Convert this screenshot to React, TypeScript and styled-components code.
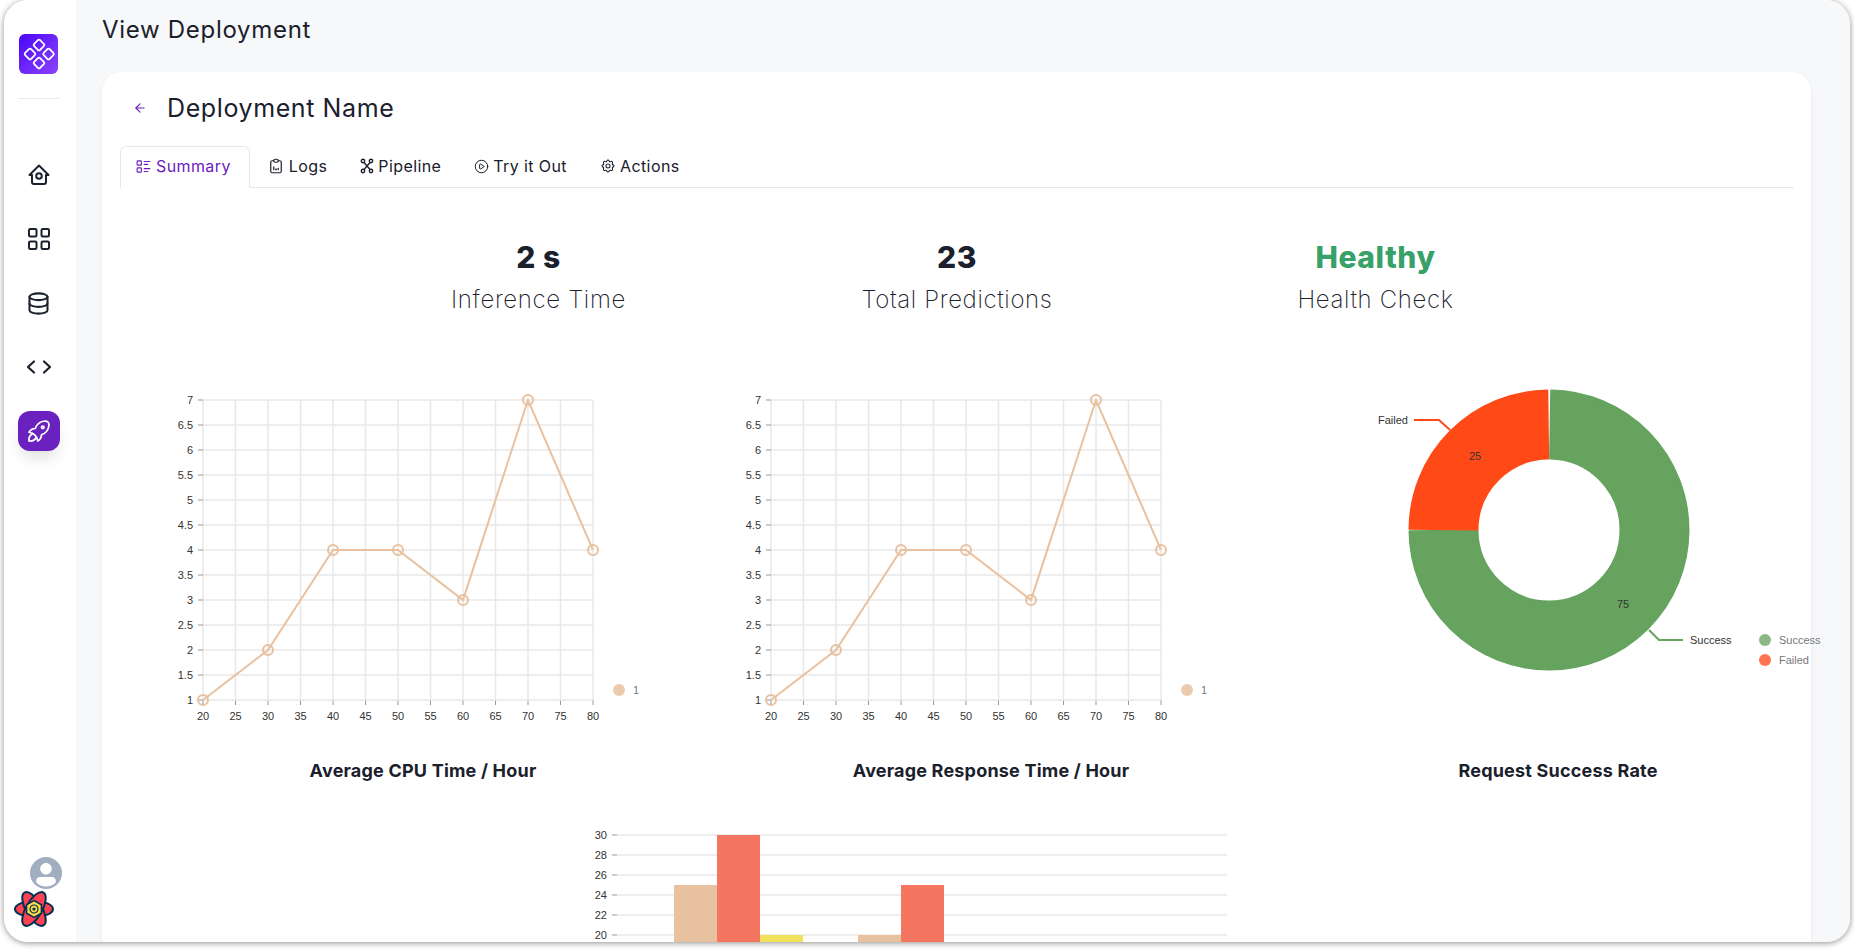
import React from 'react';
import styled, { createGlobalStyle } from 'styled-components';
import { ArrowLeft, CirclePlay } from 'lucide-react';
import { TbClipboardData, TbDatabase, TbLayoutGrid, TbListDetails, TbSettings } from 'react-icons/tb';

const INK = '#1a202c';
const PURPLE = '#6b21c0';
const TAN = '#e8c1a0';
const CORAL = '#f47560';
const YELLOW = '#f1e15b';
const AXIS_FONT = '"Liberation Sans", Arial, sans-serif';

const GlobalStyle = createGlobalStyle`
  html, body {
    margin: 0;
    height: 950px;
    overflow: hidden;
    background: #fff;
    font-family: Inter, "Open Sans", sans-serif;
    color: ${INK};
  }
  * { box-sizing: border-box; }
`;

const Frame = styled.div`
  position: relative;
  display: flex;
  height: 942px;
  margin: 0 4px;
  border-radius: 24px;
  overflow: hidden;
  box-shadow: 0 1px 6px rgba(0, 0, 0, 0.45);
`;

const Sidebar = styled.nav`
  flex: 0 0 72px;
  display: flex;
  flex-direction: column;
  align-items: center;
  padding: 34px 3px 0 0;
  background: #fff;
`;

const Logo = styled.svg`
  display: block;
`;

const SideDivider = styled.div`
  width: 42px;
  height: 1px;
  margin: 24px 0 56px;
  background: #e8ecf2;
`;

const SideButton = styled.div<{ $active?: boolean }>`
  display: flex;
  align-items: center;
  justify-content: center;
  width: 42px;
  height: 40px;
  margin-bottom: 24px;
  border-radius: 12px;
  color: ${p => (p.$active ? '#fff' : INK)};
  background: ${p => (p.$active ? PURPLE : 'transparent')};
  box-shadow: ${p => (p.$active ? '0 10px 15px -3px rgba(0,0,0,0.12)' : 'none')};
`;

const AvatarWrap = styled.div`
  margin-top: auto;
  margin-bottom: 53px;
  margin-left: 15px;
  height: 32px;
`;

const QueryBadge = styled.svg`
  position: absolute;
  left: 9px;
  bottom: 13px;
`;

const Main = styled.main`
  flex: 1;
  min-width: 0;
  padding: 0 39px 0 26px;
  background: #f7f8fa;
`;

const PageTitle = styled.h1`
  margin: 0;
  height: 72px;
  padding-top: 13px;
  font-size: 24px;
  line-height: 34px;
  font-weight: 400;
  letter-spacing: 0.7px;
`;

const Card = styled.section`
  padding: 18px 17px 0 18px;
  border-radius: 20px;
  background: #fff;
  box-shadow: 0 2px 6px rgba(0, 0, 0, 0.05);
`;

const CardHeader = styled.div`
  display: flex;
  align-items: center;
  height: 36px;
  padding-left: 13px;
  color: ${PURPLE};
`;

const CardTitle = styled.h2`
  margin: 0 0 0 20px;
  font-size: 25px;
  font-weight: 400;
  letter-spacing: 0.6px;
  color: ${INK};
`;

const TabBar = styled.div`
  display: flex;
  height: 42px;
  margin-top: 20px;
  border-bottom: 1px solid #e2e8f0;
`;

const Tab = styled.div<{ $active?: boolean }>`
  display: flex;
  align-items: center;
  gap: 4px;
  height: 42px;
  padding: ${p => (p.$active ? '0 18px 2px 14px' : '0 15px 2px 16px')};
  font-size: 16px;
  letter-spacing: 0.4px;
  border: 1px solid ${p => (p.$active ? '#e2e8f0' : 'transparent')};
  border-bottom-color: ${p => (p.$active ? '#fff' : 'transparent')};
  border-radius: 6px 6px 0 0;
  color: ${p => (p.$active ? PURPLE : INK)};
`;

const StatRow = styled.div`
  display: flex;
  justify-content: center;
  padding-top: 49px;
`;

const Stat = styled.div`
  width: 25%;
  text-align: center;
`;

const StatValue = styled.div<{ $green?: boolean }>`
  height: 40px;
  font-size: 30px;
  line-height: 40px;
  font-weight: 800;
  letter-spacing: 0.6px;
  color: ${p => (p.$green ? '#38a169' : INK)};
`;

const StatLabel = styled.div`
  margin-top: 5px;
  font-size: 24px;
  line-height: 36px;
  font-weight: 200;
  letter-spacing: 0.65px;
`;

const ChartGrid = styled.div`
  display: grid;
  grid-template-columns: 568px 568px 566px;
  margin: 42px 0 0 19px;
`;

const ChartBlock = styled.figure`
  margin: 0;
`;

const ChartSvg = styled.svg`
  display: block;
  overflow: visible;
`;

const ChartTitle = styled.figcaption`
  height: 30px;
  margin-top: 6px;
  font-size: 18px;
  line-height: 30px;
  font-weight: 700;
  letter-spacing: 0.2px;
  text-align: center;
`;

const BarRow = styled.div`
  margin: 24px 0 0 437px;
`;

const AxisLabel = styled.text`
  font-family: ${AXIS_FONT};
  font-size: 11px;
  fill: #333;
`;

const LegendLabel = styled(AxisLabel)`
  fill: #777;
`;

const GridLine = styled.line`
  stroke: #e8e8e8;
  stroke-width: 1.5;
`;

const Tick = styled.line`
  stroke: #999;
  stroke-width: 1;
`;

const range = (from: number, to: number, step: number): number[] => {
  const out: number[] = [];
  for (let v = from; v <= to + 1e-6; v += step) out.push(v);
  return out;
};

const linePoints: [number, number][] = [
  [20, 1], [30, 2], [40, 4], [50, 4], [60, 3], [70, 7], [80, 4],
];

function LineChart() {
  const sx = (v: number) => ((v - 20) / 60) * 390;
  const sy = (v: number) => 300 - ((v - 1) / 6) * 300;
  const path = linePoints.map(([x, y]) => `${sx(x)},${sy(y)}`).join(' ');
  return (
    <ChartSvg width={567} height={390}>
      <g transform="translate(64 40)">
        {range(20, 80, 5).map(v => (
          <g key={v} transform={`translate(${sx(v)} 0)`}>
            <GridLine y1={0} y2={300} />
            <Tick y1={300} y2={305} />
            <AxisLabel y={320} textAnchor="middle">{v}</AxisLabel>
          </g>
        ))}
        {range(1, 7, 0.5).map(v => (
          <g key={v} transform={`translate(0 ${sy(v)})`}>
            <GridLine x1={0} x2={390} />
            <Tick x1={-5} x2={0} />
            <AxisLabel x={-10} y={4} textAnchor="end">{v}</AxisLabel>
          </g>
        ))}
        <polyline points={path} fill="none" stroke={TAN} strokeWidth={2} />
        {linePoints.map(([x, y]) => (
          <circle key={x} cx={sx(x)} cy={sy(y)} r={5} fill="none" stroke={TAN} strokeWidth={2} />
        ))}
        <circle cx={416} cy={290} r={6} fill={TAN} opacity={0.85} />
        <LegendLabel x={430} y={294}>1</LegendLabel>
      </g>
    </ChartSvg>
  );
}

// arc between two clock angles (degrees from 12 o'clock), slightly inset so the
// round stroke gives the small corner radius of the slices
function arcPath(r0: number, r1: number, a0: number, a1: number): string {
  const pt = (r: number, a: number) => {
    const t = (a * Math.PI) / 180;
    return `${(r * Math.sin(t)).toFixed(2)} ${(-r * Math.cos(t)).toFixed(2)}`;
  };
  const large = a1 - a0 > 180 ? 1 : 0;
  return `M${pt(r1, a0)} A${r1} ${r1} 0 ${large} 1 ${pt(r1, a1)} L${pt(r0, a1)} A${r0} ${r0} 0 ${large} 0 ${pt(r0, a0)} Z`;
}

function DonutChart() {
  return (
    <ChartSvg width={566} height={390}>
      <g transform="translate(274 170)">
        <path d={arcPath(71.5, 139.5, 0.9, 269.5)} fill="#65a35f" stroke="#65a35f" strokeWidth={2} strokeLinejoin="round" />
        <path d={arcPath(71.5, 139.5, 270.5, 359.3)} fill="#ff4a17" stroke="#ff4a17" strokeWidth={2} strokeLinejoin="round" />
        <AxisLabel x={-74} y={-70} textAnchor="middle">25</AxisLabel>
        <AxisLabel x={74} y={78} textAnchor="middle">75</AxisLabel>
        <polyline points="-99,-100 -110,-110 -135,-110" fill="none" stroke="#ff4a17" strokeWidth={2} />
        <AxisLabel x={-141} y={-106} textAnchor="end">Failed</AxisLabel>
        <polyline points="100,100 110,110 134,110" fill="none" stroke="#65a35f" strokeWidth={2} />
        <AxisLabel x={141} y={114}>Success</AxisLabel>
        <circle cx={216} cy={110} r={6} fill="#8cb886" />
        <LegendLabel x={230} y={114}>Success</LegendLabel>
        <circle cx={216} cy={130} r={6} fill="#ff7350" />
        <LegendLabel x={230} y={134}>Failed</LegendLabel>
      </g>
    </ChartSvg>
  );
}

const bars: { x: number; value: number; color: string }[] = [
  { x: 57, value: 25, color: TAN },
  { x: 100, value: 30, color: CORAL },
  { x: 143, value: 20, color: YELLOW },
  { x: 241, value: 20, color: TAN },
  { x: 284, value: 25, color: CORAL },
];

function BarChart() {
  const sy = (v: number) => (30 - v) * 10;
  return (
    <ChartSvg width={700} height={200}>
      <g transform="translate(60 25)">
        {range(20, 30, 2).map(v => (
          <g key={v} transform={`translate(0 ${sy(v)})`}>
            <GridLine x1={0} x2={610} />
            <Tick x1={-5} x2={0} />
            <AxisLabel x={-10} y={4} textAnchor="end">{v}</AxisLabel>
          </g>
        ))}
        {bars.map(b => (
          <rect key={b.x} x={b.x} y={sy(b.value)} width={43} height={160} fill={b.color} />
        ))}
      </g>
    </ChartSvg>
  );
}

function LogoMark() {
  const diamonds: [number, number][] = [[20, 11], [11, 20], [29.5, 20], [20, 29]];
  return (
    <Logo width={39} height={40} viewBox="0 0 39 40">
      <defs>
        <linearGradient id="logo-fill" x1="0" y1="0" x2="1" y2="1">
          <stop offset="0" stopColor="#4a06f8" />
          <stop offset="1" stopColor="#8f44fd" />
        </linearGradient>
      </defs>
      <rect width={39} height={40} rx={6} fill="url(#logo-fill)" />
      {diamonds.map(([x, y]) => (
        <rect
          key={`${x}-${y}`}
          x={x - 4.2}
          y={y - 4.2}
          width={8.4}
          height={8.4}
          rx={1.6}
          fill="none"
          stroke="#fff"
          strokeWidth={1.8}
          transform={`rotate(45 ${x} ${y})`}
        />
      ))}
    </Logo>
  );
}

function HomeIcon() {
  return (
    <svg width={24} height={24} viewBox="0 0 24 24" fill="none" stroke="currentColor" strokeWidth={2} strokeLinecap="round" strokeLinejoin="round">
      <path d="M5 12H2.5L12 2.5 21.5 12H19v7a2 2 0 0 1-2 2H7a2 2 0 0 1-2-2z" />
      <circle cx={12} cy={13} r={2.8} />
    </svg>
  );
}

function CodeIcon() {
  return (
    <svg width={28} height={24} viewBox="0 0 28 24" fill="none" stroke="currentColor" strokeWidth={2.2} strokeLinecap="round" strokeLinejoin="round">
      <path d="M9 6.5 3 12l6 5.5" />
      <path d="M19 6.5 25 12l-6 5.5" />
    </svg>
  );
}

function RocketIcon() {
  return (
    <svg width={30} height={30} viewBox="0 0 24 24" fill="none" stroke="currentColor" strokeWidth={1.4} strokeLinecap="round" strokeLinejoin="round">
      <path d="M4 13a8 8 0 0 1 7 7a6 6 0 0 0 3-5a9 9 0 0 0 6-8a3 3 0 0 0-3-3a9 9 0 0 0-8 6a6 6 0 0 0-5 3" />
      <path d="M7 14a6 6 0 0 0-3 6a6 6 0 0 0 6-3" />
      <circle cx={15} cy={9} r={1} />
    </svg>
  );
}

function PipelineIcon() {
  return (
    <svg width={14} height={16} viewBox="0 0 14 16" fill="none" stroke="currentColor" strokeWidth={1.4}>
      <circle cx={3} cy={3} r={1.7} />
      <circle cx={11} cy={3} r={1.7} />
      <circle cx={3} cy={13} r={1.7} />
      <circle cx={11} cy={13} r={1.7} />
      <path d="M4 4.5 10 11.5M10 4.5 4 11.5" />
    </svg>
  );
}

function Avatar() {
  return (
    <svg width={32} height={32} viewBox="0 0 32 32">
      <circle cx={16} cy={16} r={16} fill="#a0aec0" />
      <g fill="#fff" transform="scale(0.25)">
        <path d="M103 102.14C93.09 111.92 79.35 118 64.16 118 48.81 118 34.93 111.77 25 101.79V95.2C25 86.81 31.98 80 40.6 80h46.8C96.02 80 103 86.81 103 95.2v6.94z" />
        <path d="M64 24C51.29 24 41 34.29 41 47s10.29 23 23 23 23-10.3 23-23-10.3-23-23-23z" />
      </g>
    </svg>
  );
}

function QueryLogo() {
  return (
    <QueryBadge width={42} height={40} viewBox="-21 -20 42 40">
      {[0, 60, 120].map(a => (
        <ellipse key={a} rx={19} ry={8} fill="#ff4154" stroke="#00304f" strokeWidth={2} transform={`rotate(${a})`} />
      ))}
      <polygon points="0,-8.5 7.4,-4.2 7.4,4.2 0,8.5 -7.4,4.2 -7.4,-4.2" fill="#ffd94c" stroke="#00304f" strokeWidth={1.5} />
      <circle r={4} fill="none" stroke="#00304f" strokeWidth={1.2} />
      <circle r={1.6} fill="#00304f" />
    </QueryBadge>
  );
}

export default function App() {
  return (
    <>
      <GlobalStyle />
      <Frame>
        <Sidebar>
          <LogoMark />
          <SideDivider />
          <SideButton><HomeIcon /></SideButton>
          <SideButton><TbLayoutGrid size={30} strokeWidth={1.6} /></SideButton>
          <SideButton><TbDatabase size={27} strokeWidth={1.8} /></SideButton>
          <SideButton><CodeIcon /></SideButton>
          <SideButton $active><RocketIcon /></SideButton>
          <AvatarWrap><Avatar /></AvatarWrap>
        </Sidebar>
        <Main>
          <PageTitle>View Deployment</PageTitle>
          <Card>
            <CardHeader>
              <ArrowLeft size={14} strokeWidth={2} />
              <CardTitle>Deployment Name</CardTitle>
            </CardHeader>
            <TabBar>
              <Tab $active><TbListDetails size={17} strokeWidth={1.6} />Summary</Tab>
              <Tab><TbClipboardData size={18} strokeWidth={1.6} />Logs</Tab>
              <Tab><PipelineIcon />Pipeline</Tab>
              <Tab><CirclePlay size={15} strokeWidth={1.6} />Try it Out</Tab>
              <Tab><TbSettings size={16} strokeWidth={1.6} />Actions</Tab>
            </TabBar>
            <StatRow>
              <Stat><StatValue>2 s</StatValue><StatLabel>Inference Time</StatLabel></Stat>
              <Stat><StatValue>23</StatValue><StatLabel>Total Predictions</StatLabel></Stat>
              <Stat><StatValue $green>Healthy</StatValue><StatLabel>Health Check</StatLabel></Stat>
            </StatRow>
            <ChartGrid>
              <ChartBlock><LineChart /><ChartTitle>Average CPU Time / Hour</ChartTitle></ChartBlock>
              <ChartBlock><LineChart /><ChartTitle>Average Response Time / Hour</ChartTitle></ChartBlock>
              <ChartBlock><DonutChart /><ChartTitle>Request Success Rate</ChartTitle></ChartBlock>
            </ChartGrid>
            <BarRow><BarChart /></BarRow>
          </Card>
        </Main>
        <QueryLogo />
      </Frame>
    </>
  );
}
